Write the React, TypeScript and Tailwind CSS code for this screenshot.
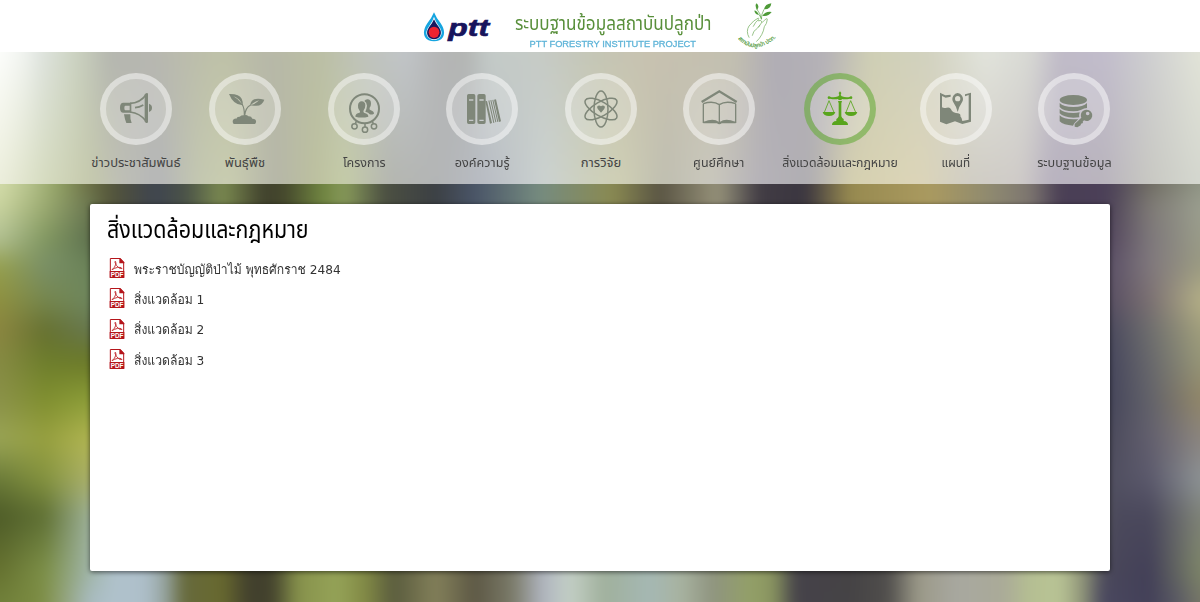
import { useId } from "react";
import type { ReactNode } from "react";

type Stop = [number, string];
type Row = { y: number; stops: Stop[] };

/* Soft colour mesh: horizontal gradients cross-faded from row to row, then softened. */
function Mesh({ width, height, rows }: { width: number; height: number; rows: Row[] }) {
  const id = useId();
  const pad = 60;
  const box = { x: -pad, y: -pad, width: width + pad * 2, height: height + pad * 2 };
  return (
    <svg className="absolute inset-0 h-full w-full" viewBox={`0 0 ${width} ${height}`} preserveAspectRatio="none" aria-hidden="true">
      <defs>
        <filter id={`${id}blur`} filterUnits="userSpaceOnUse" {...box} colorInterpolationFilters="sRGB">
          <feGaussianBlur stdDeviation="7 9" />
        </filter>
        {rows.map((row, i) => (
          <linearGradient key={i} id={`${id}r${i}`} gradientUnits="userSpaceOnUse" x1="0" y1="0" x2={width} y2="0">
            {row.stops.map(([x, color], k) => (
              <stop key={k} offset={x / width} stopColor={color} />
            ))}
          </linearGradient>
        ))}
        {rows.slice(1).map((row, i) => (
          <linearGradient key={i} id={`${id}f${i + 1}`} gradientUnits="userSpaceOnUse" x1="0" y1={rows[i].y} x2="0" y2={row.y}>
            <stop offset="0" stopColor="#000" />
            <stop offset="1" stopColor="#fff" />
          </linearGradient>
        ))}
        {rows.slice(1).map((_, i) => (
          <mask key={i} id={`${id}m${i + 1}`} maskUnits="userSpaceOnUse" {...box}>
            <rect {...box} fill={`url(#${id}f${i + 1})`} />
          </mask>
        ))}
      </defs>
      <g filter={`url(#${id}blur)`}>
        {rows.map((_, i) => (
          <rect key={i} {...box} fill={`url(#${id}r${i})`} mask={i ? `url(#${id}m${i})` : undefined} />
        ))}
      </g>
    </svg>
  );
}

const navRows: Row[] = [
  {
    y: 0,
    stops: [
      [0, "#fdfefc"], [25, "#f0f3ef"], [40, "#e0e5e0"], [77, "#cbd2c0"], [110, "#b5b7af"], [150, "#b7b7b1"], [222, "#bfc2a8"], [268, "#b7b8a8"],
      [320, "#bbbfa4"], [367, "#c0c4bd"], [405, "#c1c5c8"], [440, "#b5b6b6"], [465, "#b3b5b3"], [490, "#c4cbc8"], [540, "#c6cbc6"], [597, "#c5c6b5"],
      [650, "#c8c2b0"], [735, "#c2bfb0"], [775, "#b0adb5"], [825, "#b5b2b8"], [870, "#cfcfb5"], [930, "#d2d2c0"], [985, "#e2e4dc"], [1030, "#d8d9d4"],
      [1060, "#c0bbc8"], [1105, "#c2bdcc"], [1145, "#cdcdd0"], [1200, "#e2e4d8"],
    ],
  },
  {
    y: 131,
    stops: [
      [0, "#eceedc"], [45, "#d5dbbf"], [90, "#c5c9ac"], [120, "#bebfb5"], [160, "#b5b6b8"], [200, "#c4c8b0"], [230, "#c9cdb0"], [275, "#b5b6a8"],
      [315, "#bcc09f"], [345, "#c5cca8"], [390, "#b4b6b0"], [440, "#b3b5b6"], [485, "#b8bcc4"], [545, "#cbd2d0"], [590, "#cdd0bc"], [620, "#cfcfb4"],
      [665, "#bfbeb0"], [710, "#cac8bd"], [760, "#b5b2b8"], [810, "#b0aeb2"], [850, "#d5d0b0"], [920, "#dcd5b8"], [970, "#d0cdc4"], [1020, "#cfcbc8"],
      [1050, "#b8b2bf"], [1105, "#b9b4bd"], [1150, "#c8c8c2"], [1200, "#d4d7cf"],
    ],
  },
];

const topMiddle: Stop[] = [
  [107, "#595b3c"], [125, "#4c4e40"], [155, "#3f4550"], [185, "#4a5248"], [222, "#7b8a50"], [265, "#40412d"], [285, "#46492d"], [322, "#6f8440"],
  [345, "#87995a"], [385, "#4c5042"], [435, "#3c4044"], [475, "#4a5568"], [540, "#768c80"], [612, "#8a8a52"], [660, "#5a5544"], [718, "#96927a"],
  [760, "#413c44"], [805, "#3b3640"], [850, "#978a50"], [930, "#aa9a60"], [990, "#8f8a70"], [1030, "#7d7670"], [1060, "#4a3f55"], [1100, "#4b3f58"],
];

const bottomMiddle: Stop[] = [
  [115, "#b0c2cc"], [145, "#aebfca"], [165, "#96a4a0"], [184, "#66693c"], [222, "#68692f"], [250, "#413f2d"], [272, "#43422d"], [298, "#87924c"],
  [337, "#95a358"], [365, "#828a45"], [394, "#5a5c3e"], [436, "#83805a"], [475, "#5d5845"], [512, "#7a7a68"], [543, "#b0b5c0"], [570, "#c3cfc5"],
  [604, "#a0b09c"], [650, "#a5b8b4"], [681, "#a8b3a0"], [712, "#8f9480"], [750, "#93a068"], [773, "#8a9560"], [796, "#45424a"], [850, "#454345"],
  [888, "#504e4c"], [918, "#9b9988"], [957, "#a8a8a0"], [1003, "#aaaa98"], [1030, "#b5bf92"], [1060, "#b9c495"], [1083, "#8f9478"],
];

const bodyRows: Row[] = [
  { y: 0, stops: [[0, "#d3dcaa"], [30, "#b5c28c"], [60, "#8f9f62"], [90, "#6b6e45"], ...topMiddle, [1115, "#50465a"], [1150, "#6f6c62"], [1200, "#8f9484"]] },
  { y: 20, stops: [[0, "#cbd5a0"], [45, "#9dac72"], [90, "#6c7850"], ...topMiddle, [1110, "#4e4458"], [1150, "#7e7a75"], [1200, "#9b9f90"]] },
  { y: 56, stops: [[0, "#b0bf92"], [45, "#819760"], [88, "#5f7350"], ...topMiddle, [1110, "#56495f"], [1150, "#7d777b"], [1200, "#999b88"]] },
  { y: 81, stops: [[0, "#95a050"], [45, "#7a9068"], [90, "#6b8358"], [1110, "#5d5268"], [1150, "#80787d"], [1200, "#9a9a82"]] },
  { y: 116, stops: [[0, "#8e9040"], [45, "#76874e"], [90, "#6f875e"], [1110, "#5a5063"], [1150, "#7b7072"], [1200, "#b5b087"]] },
  { y: 146, stops: [[0, "#8a8540"], [45, "#667030"], [90, "#67774f"], [1110, "#4b4a5e"], [1150, "#6e6e6e"], [1200, "#a09e7c"]] },
  { y: 176, stops: [[0, "#858a42"], [45, "#6d7d2c"], [90, "#6a7828"], [1110, "#47475d"], [1150, "#68686c"], [1200, "#969678"]] },
  { y: 216, stops: [[0, "#8a9148"], [45, "#808f30"], [90, "#8c9e38"], [1110, "#46465b"], [1150, "#62626a"], [1200, "#918668"]] },
  { y: 256, stops: [[0, "#9aa555"], [45, "#97a040"], [90, "#b2b652"], [1110, "#4c4b5c"], [1150, "#625f6e"], [1200, "#8b8580"]] },
  { y: 296, stops: [[0, "#6a7a38"], [45, "#83923f"], [90, "#aab06a"], [1110, "#504f60"], [1150, "#5b596c"], [1200, "#8d9396"]] },
  { y: 331, stops: [[0, "#4e5c28"], [45, "#5f7034"], [90, "#9eb298"], ...bottomMiddle, [1110, "#4c4a5c"], [1150, "#4a485c"], [1200, "#7f8378"]] },
  { y: 387, stops: [[0, "#667230"], [45, "#7d9048"], [90, "#a0b5a8"], ...bottomMiddle, [1105, "#4a485a"], [1150, "#434058"], [1200, "#7d8568"]] },
  { y: 418, stops: [[0, "#70803a"], [40, "#7c8c42"], [60, "#8f9f70"], [90, "#a9bcc2"], ...bottomMiddle, [1102, "#4a4860"], [1150, "#434058"], [1178, "#5a5a65"], [1200, "#767668"]] },
];

const icons: Record<string, ReactNode> = {
  news: (
    <g fill="currentColor">
      <path fillRule="evenodd" d="M70 89H94V119H70Q60 119 60 104T70 89ZM76 98Q73 98 73 105T76 112H89V98Z" />
      <path fill="none" stroke="currentColor" strokeWidth="5" d="M90 91Q120 91 140 63M90 117Q120 120 140 146" />
      <path d="M138 62Q142 58 144 62V148Q142 152 137 149ZM147 92Q156 95 156 104.500T147 117ZM72 124H91Q90 138 95 150H79Q74 138 72 124Z" />
      <path fill="none" stroke="currentColor" strokeWidth="5" d="M105 104Q118 103 130 96" />
      <path d="M134 64L140 60V150L134 146Z" />
    </g>
  ),
  plant: (
    <g fill="currentColor">
      <path fillRule="evenodd" d="M60 63Q91 62 98 77Q103 87 101 97Q73 96 60 63ZM73 70Q86 76 99 93Q92 77 73 70Z" />
      <path fillRule="evenodd" d="M166 80Q160 98 142 98Q130 99 123 97Q128 69 166 80ZM150 82Q136 86 125 96Q142 92 150 82Z" />
      <path fill="none" stroke="currentColor" strokeWidth="3.500" d="M99 93Q107 106 106 128M125 96Q109 104 107 128" />
      <path d="M74 153Q68 145 74 139Q78 136 82 137Q84 130 92 131Q98 126 105 127Q113 124 118 130Q127 129 130 137Q138 136 141 143Q142 150 138 153Z" />
    </g>
  ),
  project: (
    <g fill="currentColor">
      <circle cx="109.500" cy="107" r="43.500" fill="none" stroke="currentColor" strokeWidth="6" />
      <path d="M82 131Q82 121 95 119Q98 116 94 112Q89 107 90 97Q91 86 101 85Q112 86 112 97Q112 107 107 112Q105 117 108 119Q122 122 121 131Q102 136 82 131Z" />
      <path d="M109 84Q113 78 120 79Q129 80 129 92Q129 99 125 104Q123 109 127 111Q138 115 138 122Q131 126 125 124Q122 118 112 116Q116 108 117 98Q116 88 109 84Z" />
      <g fill="none" stroke="currentColor" strokeWidth="4.500">
        <circle cx="79.500" cy="160" r="8" />
        <circle cx="111" cy="170" r="8" />
        <circle cx="138" cy="160" r="8" />
        <path d="M82 152L86 143M111 150V162M136 152L132 143" />
      </g>
    </g>
  ),
  books: (
    <g fill="currentColor">
      <path fillRule="evenodd" d="M68 63H83Q88 63 88 68V148Q88 153 83 153H68Q63 153 63 148V68Q63 63 68 63ZM69 79V83H82V79ZM69 140V144H82V140Z" />
      <path fillRule="evenodd" d="M100 63H114Q119 63 119 68V148Q119 153 114 153H100Q94 153 94 148V68Q94 63 100 63ZM100 79V83H113V79ZM100 140V144H113V140Z" />
      <path d="M118 85L123 84L138 150L132 152ZM127 83L130 82L145 149L142 150ZM133 82L136 81L151 147L148 148ZM139 81L142 80L157 146L154 147ZM144 80L150 79L165 145L159 147Z" />
    </g>
  ),
  atom: (
    <g fill="none" stroke="currentColor" strokeWidth="4.500">
      <ellipse cx="108" cy="108" rx="21" ry="54" />
      <ellipse cx="108" cy="108" rx="21" ry="54" transform="rotate(60 108 108)" />
      <ellipse cx="108" cy="108" rx="21" ry="54" transform="rotate(-60 108 108)" />
      <path fill="currentColor" stroke="none" d="M108 119L99 109Q95 104 97 100Q102 95 108 100Q114 95 119 100Q121 104 117 109Z" />
    </g>
  ),
  house: (
    <g fill="none" stroke="currentColor" strokeWidth="4">
      <path strokeWidth="7" d="M56 87L109 55L161 87" />
      <path d="M61 92V148H158V92M61 92Q90 82 109 95Q128 82 158 92M109 95V146" />
      <path fill="currentColor" stroke="none" d="M61 147Q92 134 107 147Q109 148 111 147Q127 134 158 147V151H116Q113 154 109 154T102 151H61Z" />
    </g>
  ),
  scales: (
    <g fill="currentColor">
      <path d="M108 55L112 60L110 66L113 70Q128 75 138 71L138 77Q124 80 114 78L112 81H104L102 78Q92 80 78 77V71Q88 75 103 70L106 66L104 60Z" />
      <circle cx="75" cy="74" r="4" />
      <circle cx="141" cy="74" r="4" />
      <path d="M102 84H114L112 91V130Q114 137 119 138V144Q132 145 132 156H84Q84 145 97 144V138Q102 137 104 130V91Z" />
      <path fill="none" stroke="currentColor" strokeWidth="2.500" d="M61 118L75 83L90 118M126 118L140 83L155 118" />
      <path d="M56 117H94Q91 129 75 129T56 117ZM122 117H160Q157 129 141 129T122 117Z" />
    </g>
  ),
  map: (
    <g fill="currentColor">
      <path d="M60 59L66 62L76 67L92 65V71L77 74L66 69V103Q72 107 80 104Q90 101 93 109Q95 115 101 118Q108 121 114 121Q123 123 121 130Q125 134 127 144L146 140V66L135 70V64L153 59V146L127 153L105 145L79 154L60 146Z" />
      <path fillRule="evenodd" d="M113 117Q109 101 100 88Q94 78 100 68Q105 60 113 60T126 68Q132 78 126 88Q117 101 113 117ZM113 69A8 8 0 1 0 113 85A8 8 0 1 0 113 69Z" />
    </g>
  ),
  database: (
    <g fill="currentColor">
      <ellipse cx="106" cy="81" rx="41" ry="15" />
      <path d="M65 90Q76 102 106 102T147 90V105Q138 105 130 110Q120 115 106 115Q76 115 65 102Z" />
      <path d="M65 108Q76 120 106 120Q116 120 125 118Q122 127 124 133Q115 134 106 134Q76 133 65 121Z" />
      <path d="M65 127Q76 139 106 139H121L109 151Q106 157 105 158Q76 156 65 145Z" />
      <path fillRule="evenodd" d="M145 110A17 17 0 1 1 138 142L134 146L135 150L129 152L128 157L118 163L110 161V153L130 134A17 17 0 0 1 145 110ZM149 116A5 5 0 1 0 149 127A5 5 0 1 0 149 116Z" />
    </g>
  ),
};

const menu = [
  { label: "ข่าวประชาสัมพันธ์", icon: "news", box: "w-[92px]", text: "" },
  { label: "พันธุ์พืช", icon: "plant", box: "w-[126px]", text: "" },
  { label: "โครงการ", icon: "project", box: "w-[112px]", text: "scale-x-[.96]" },
  { label: "องค์ความรู้", icon: "books", box: "w-[124px]", text: "scale-x-[.97]" },
  { label: "การวิจัย", icon: "atom", box: "w-[114px]", text: "" },
  { label: "ศูนย์ศึกษา", icon: "house", box: "w-[122px]", text: "scale-x-[.96]" },
  { label: "สิ่งแวดล้อมและกฎหมาย", icon: "scales", box: "w-[120px]", text: "scale-x-[.945]", active: true },
  { label: "แผนที่", icon: "map", box: "w-[112px]", text: "scale-x-[.9]" },
  { label: "ระบบฐานข้อมูล", icon: "database", box: "w-[124px]", text: "scale-x-[.97]" },
];

const documents = ["พระราชบัญญัติป่าไม้ พุทธศักราช 2484", "สิ่งแวดล้อม 1", "สิ่งแวดล้อม 2", "สิ่งแวดล้อม 3"];

function PttLogo() {
  return (
    <svg className="h-[52px] w-[70px]" viewBox="0 0 210 156" aria-label="ptt">
      <path fill="#16a5e0" d="M33 37Q41 56 53 70Q69 94 60 111Q52 124 33 124T6 111Q-3 94 13 70Q25 56 33 37Z" />
      <path fill="#fff" d="M33 50Q37 64 47 77Q61 96 53 109Q46 120 33 120T13 109Q5 96 19 77Q29 64 33 50Z" />
      <path fill="#19175e" d="M33 58Q38 70 48 82Q58 97 51 109Q45 118 33 118T15 109Q8 97 18 82Q28 70 33 58Z" />
      <ellipse cx="33" cy="97" rx="16" ry="17" fill="#ee2330" />
      <text x="76" y="109" fontFamily="Liberation Sans, sans-serif" fontSize="70" fontWeight="700" fontStyle="italic" fill="#17145c" stroke="#17145c" strokeWidth="2" textLength="122" lengthAdjust="spacingAndGlyphs">ptt</text>
    </svg>
  );
}

function InstituteLogo() {
  return (
    <svg className="h-[52px] w-[42px] overflow-visible" viewBox="0 0 126 156" aria-label="สถาบันปลูกป่า ปตท.">
      <defs>
        <path id="seal-arc" d="M3 116Q52 170 118 112" />
      </defs>
      <g fill="#4e9a38">
        <path d="M59 10Q52 15 60 30Q69 20 59 10ZM103 10Q84 12 81 28Q101 29 103 10ZM104 36Q86 33 76 47Q92 52 104 36ZM52 32Q57 30 66 44Q55 45 52 32Z" />
        <path fill="none" stroke="#5aa345" strokeWidth="2" d="M58 25Q72 42 73 58M81 28Q73 42 73 58M66 44L74 56" />
      </g>
      <g fill="none" stroke="#86b873" strokeWidth="2.500" strokeLinecap="round">
        <path d="M36 112Q26 94 36 78Q50 60 64 54Q68 57 56 67L49 79M64 62Q74 59 75 66L65 81M76 67Q91 51 91 58Q90 71 82 80Q78 106 59 124M46 106Q48 92 61 85L68 76" />
      </g>
      <text fontFamily="Noto Sans Thai, Loma, sans-serif" fontSize="17" fontWeight="400" fill="#4f9a3a" stroke="#4f9a3a" strokeWidth="0.500">
        <textPath href="#seal-arc" textLength="130">สถาบันปลูกป่า ปตท.</textPath>
      </text>
    </svg>
  );
}

function PdfIcon() {
  return (
    <svg className="h-5 w-4 shrink-0" viewBox="0 0 48 60" aria-hidden="true">
      <path fill="#fff" stroke="#b5151b" strokeWidth="3" d="M4 1.500H33L44 13V58H4Z" />
      <path fill="#b5151b" d="M31 0H34L46 13V16H31ZM2 39H46V60H2Z" />
      <path fill="none" stroke="#c5383c" strokeWidth="3" d="M9 35Q18 29 21 17Q20 8 18 10T23 23Q30 33 39 32Q40 27 26 28Q17 30 9 35Z" />
      <text x="5" y="57" fontFamily="Liberation Sans, sans-serif" fontSize="21" fontWeight="700" fill="#fff" textLength="38" lengthAdjust="spacingAndGlyphs">PDF</text>
    </svg>
  );
}

export default function App() {
  return (
    <div className="flex h-[602px] w-full flex-col overflow-hidden font-['Noto_Sans_Thai','Loma','Garuda',sans-serif]">
      <header className="flex h-[52px] shrink-0 bg-white pl-[423px]">
        <PttLogo />
        <div className="ml-[22px] flex w-[196px] flex-col items-center pt-[12px]">
          <h1 className="scale-x-[.9] whitespace-nowrap text-[19px] leading-[26px] text-[#588f3a]">ระบบฐานข้อมูลสถาบันปลูกป่า</h1>
          <p className="scale-x-[1.03] whitespace-nowrap font-['Liberation_Sans',sans-serif] text-[9px] leading-[12px] text-[#5fb4d8] [-webkit-text-stroke:0.3px_#5fb4d8]">PTT FORESTRY INSTITUTE PROJECT</p>
        </div>
        <div className="ml-[26px]">
          <InstituteLogo />
        </div>
      </header>

      <nav className="relative h-[132px] shrink-0">
        <Mesh width={1200} height={132} rows={navRows} />
        <ul className="relative flex pl-[90px] pt-[21px]">
          {menu.map((item) => (
            <li key={item.icon} className={`flex shrink-0 flex-col items-center ${item.box}`}>
              <span
                className={`h-[72px] w-[72px] rounded-full border-[6px] bg-white/20 bg-clip-padding ${
                  item.active ? "border-[#68ac3a]/60 text-[#58a51c]" : "border-white/50 text-[#7f8779]"
                }`}
              >
                <svg className="-m-[6px] h-[72px] w-[72px]" viewBox="0 0 216 216" aria-hidden="true">
                  {icons[item.icon]}
                </svg>
              </span>
              <span className={`mt-2 whitespace-nowrap text-[13px] leading-5 text-[#444] ${item.text}`}>{item.label}</span>
            </li>
          ))}
        </ul>
      </nav>

      <main className="relative grow pt-5">
        <Mesh width={1200} height={418} rows={bodyRows} />
        <section className="relative mx-auto h-[367px] w-[1020px] rounded-[2px] bg-white px-[17px] pt-[11px] shadow-[0_1px_5px_rgba(0,0,0,0.6)]">
          <h2 className="origin-left scale-x-[.893] whitespace-nowrap text-[24px] leading-8 text-black">สิ่งแวดล้อมและกฎหมาย</h2>
          <ul className="mt-[6px]">
            {documents.map((name) => (
              <li key={name} className="flex h-[30.3px] items-center gap-[9px] pl-[2px]">
                <PdfIcon />
                <a className="origin-left scale-x-[.936] whitespace-nowrap pt-[3px] font-['DejaVu_Sans','Loma','Waree','Noto_Sans_Thai',sans-serif] text-[13px] leading-5 text-[#333]">{name}</a>
              </li>
            ))}
          </ul>
        </section>
      </main>
    </div>
  );
}
